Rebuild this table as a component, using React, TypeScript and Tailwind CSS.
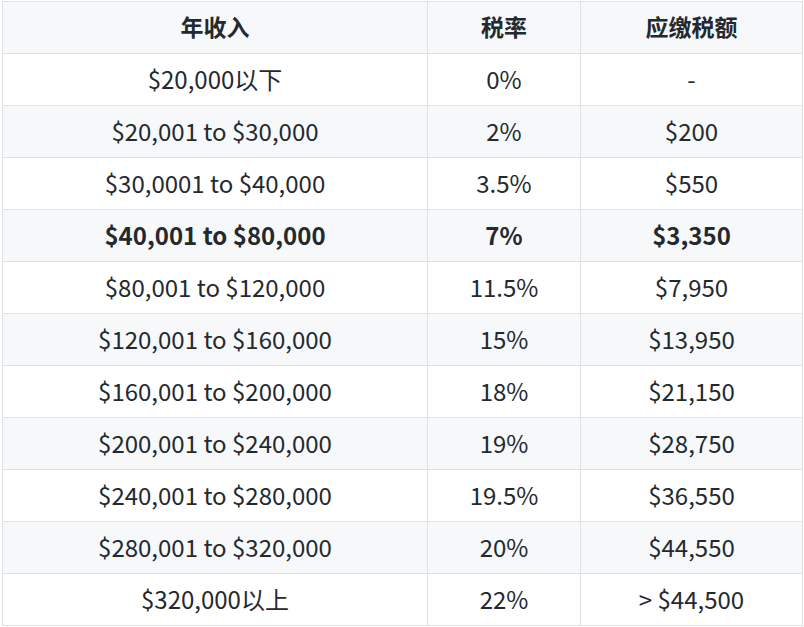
import React from "react";

const rows: [string, string, string][] = [
  ["$20,000以下", "0%", "-"],
  ["$20,001 to $30,000", "2%", "$200"],
  ["$30,0001 to $40,000", "3.5%", "$550"],
  ["$40,001 to $80,000", "7%", "$3,350"],
  ["$80,001 to $120,000", "11.5%", "$7,950"],
  ["$120,001 to $160,000", "15%", "$13,950"],
  ["$160,001 to $200,000", "18%", "$21,150"],
  ["$200,001 to $240,000", "19%", "$28,750"],
  ["$240,001 to $280,000", "19.5%", "$36,550"],
  ["$280,001 to $320,000", "20%", "$44,550"],
  ["$320,000以上", "22%", "> $44,500"],
];

export default function App() {
  return (
    <div className="w-[804px] h-[627px] bg-white pl-[2px] pt-[1px] font-['Noto_Sans_CJK_SC',sans-serif] text-[#24292e]">
      <table className="w-[800px] border-collapse table-fixed text-[24px]">
        <colgroup>
          <col className="w-[425px]" />
          <col className="w-[153px]" />
          <col className="w-[222px]" />
        </colgroup>
        <thead>
          <tr className="bg-[#f6f8fa] h-[52px]">
            <th className="border border-[#dfe2e5] font-bold text-[23px] p-0 pb-[2px] leading-[1]">年收入</th>
            <th className="border border-[#dfe2e5] font-bold text-[23px] p-0 pb-[2px] leading-[1]">税率</th>
            <th className="border border-[#dfe2e5] font-bold text-[23px] p-0 pb-[2px] leading-[1]">应缴税额</th>
          </tr>
        </thead>
        <tbody>
          {rows.map((r, i) => (
            <tr
              key={r[0]}
              className={`h-[52px] ${i % 2 === 1 ? "bg-[#f6f8fa]" : "bg-white"} ${i === 3 ? "font-bold" : ""}`}
            >
              {r.map((c, j) => (
                <td key={j} className="border border-[#dfe2e5] text-center p-0 pb-[2px] leading-[1]">
                  {c}
                </td>
              ))}
            </tr>
          ))}
        </tbody>
      </table>
    </div>
  );
}
